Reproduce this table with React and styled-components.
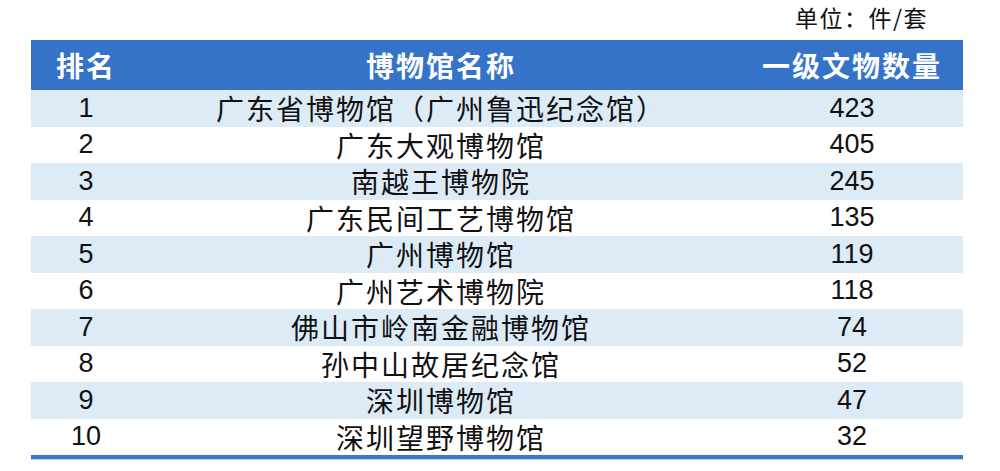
import React from "react";
import styled, { createGlobalStyle } from "styled-components";

const Global = createGlobalStyle`
  html, body { margin: 0; padding: 0; background: #ffffff; }
  body { font-family: "Liberation Sans", "Noto Sans CJK SC", sans-serif; color: #111; }
`;

const Page = styled.div`
  width: 1000px;
  height: 471px;
  display: flex;
  flex-direction: column;
  padding-left: 31px;
  box-sizing: border-box;
`;

const UnitLine = styled.div`
  width: 932px;
  height: 40px;
  display: flex;
  justify-content: flex-end;
  align-items: flex-start;
  padding-right: 35px;
  box-sizing: border-box;
  font-size: 23px;
  line-height: 34px;
  letter-spacing: 1.5px;
  color: #111;
  font-family: "Noto Sans CJK SC", sans-serif;
`;

const Table = styled.div`
  width: 932px;
  display: grid;
  grid-template-columns: 110px 600px 222px;
  grid-template-rows: 50px repeat(10, 36.5px);
  border-bottom: 4px solid #3a76cc;
  box-shadow: 0 1px 0 #b9cfee;
`;

const HeadCell = styled.div`
  background: #3573c9;
  color: #ffffff;
  font-weight: 700;
  font-size: 28px;
  letter-spacing: 2px;
  display: flex;
  align-items: center;
  justify-content: center;
  font-family: "Noto Sans CJK SC", sans-serif;
`;

const Cell = styled.div`
  background: ${(p) => (p.$shade ? "#ddebf7" : "#ffffff")};
  display: flex;
  align-items: center;
  justify-content: center;
  font-size: ${(p) => (p.$cjk ? "28px" : "27px")};
  color: #111;
  letter-spacing: ${(p) => (p.$cjk ? "2px" : "0")};
  font-family: ${(p) =>
    p.$cjk ? '"Noto Sans CJK SC", sans-serif' : '"Liberation Sans", sans-serif'};
`;

const rows = [
  ["1", "广东省博物馆（广州鲁迅纪念馆）", "423"],
  ["2", "广东大观博物馆", "405"],
  ["3", "南越王博物院", "245"],
  ["4", "广东民间工艺博物馆", "135"],
  ["5", "广州博物馆", "119"],
  ["6", "广州艺术博物院", "118"],
  ["7", "佛山市岭南金融博物馆", "74"],
  ["8", "孙中山故居纪念馆", "52"],
  ["9", "深圳博物馆", "47"],
  ["10", "深圳望野博物馆", "32"],
];

export default function App() {
  return (
    <>
      <Global />
      <Page>
        <UnitLine>单位：件/套</UnitLine>
        <Table>
          <HeadCell>排名</HeadCell>
          <HeadCell>博物馆名称</HeadCell>
          <HeadCell>一级文物数量</HeadCell>
          {rows.map(([rank, name, count], i) => {
            const shade = i % 2 === 0;
            return (
              <React.Fragment key={rank}>
                <Cell $shade={shade}>{rank}</Cell>
                <Cell $shade={shade} $cjk>
                  {name}
                </Cell>
                <Cell $shade={shade}>{count}</Cell>
              </React.Fragment>
            );
          })}
        </Table>
      </Page>
    </>
  );
}
